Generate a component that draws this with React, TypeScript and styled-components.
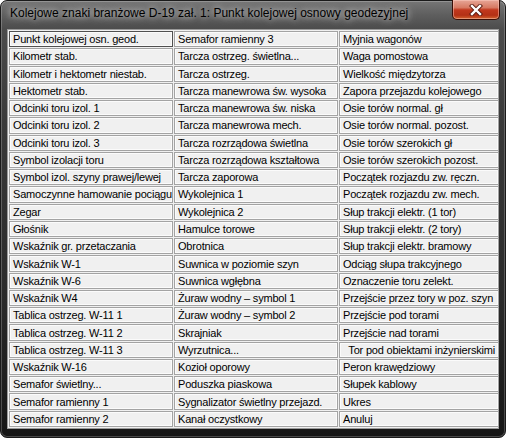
import React from "react";
import styled, { createGlobalStyle } from "styled-components";

const Global = createGlobalStyle`
  html, body { margin: 0; padding: 0; background: #ffffff; }
  body { width: 506px; height: 438px; overflow: hidden; }
`;

const Window = styled.div`
  box-sizing: border-box;
  width: 506px;
  height: 438px;
  border-radius: 7px;
  border: 1px solid #1a1a1a;
  background: linear-gradient(to bottom, #767676 0px, #5e5e5e 14px, #4c4c4c 28px, #3a3a3a 120px, #2a2a2a 300px, #161616 437px);
  box-shadow: inset 0 0 0 1px rgba(255, 255, 255, 0.22);
  display: flex;
  flex-direction: column;
  padding: 0 6px 8px 6px;
`;

const TitleBar = styled.div`
  height: 28px;
  display: flex;
  align-items: flex-start;
  justify-content: space-between;
`;

const Title = styled.div`
  font-family: "Liberation Sans", Arial, sans-serif;
  font-size: 12px;
  color: #000;
  padding: 5px 0 0 3px;
  white-space: nowrap;
  text-shadow: 0 0 6px rgba(255, 255, 255, 0.75), 0 0 10px rgba(255, 255, 255, 0.5);
`;

const CloseButton = styled.div`
  box-sizing: border-box;
  width: 48px;
  height: 20px;
  margin-top: -1px;
  margin-right: -1px;
  border: 1px solid #3a0e06;
  border-top: none;
  border-radius: 0 0 5px 5px;
  background: linear-gradient(to bottom, #e7a697 0%, #d77a63 40%, #c1381e 52%, #b43015 80%, #d2642f 100%);
  box-shadow: inset 0 0 0 1px rgba(255, 210, 200, 0.45);
  display: flex;
  align-items: center;
  justify-content: center;
`;

const Client = styled.div`
  box-sizing: border-box;
  flex: 1;
  background: #f0f0f0;
  border: 1px solid #9a9a9a;
  padding: 1px 0 1px 1px;
  display: grid;
  grid-template-columns: 164px 164px 160px;
  grid-template-rows: repeat(23, 1fr);
  column-gap: 1px;
  row-gap: 1px;
`;

const Cell = styled.div<{ $focused?: boolean; $align?: "left" | "right" }>`
  box-sizing: border-box;
  border: 1px solid ${(p) => (p.$focused ? "#505050" : "#a3a3a3")};
  background: #f0f0f0;
  box-shadow: inset 0 0 0 1px #fbfbfb;
  font-family: "Liberation Sans", Tahoma, Arial, sans-serif;
  font-size: 11px;
  letter-spacing: -0.2px;
  color: #000;
  display: flex;
  align-items: center;
  justify-content: ${(p) => (p.$align === "right" ? "flex-end" : "flex-start")};
  padding: 0 3px;
  white-space: nowrap;
  overflow: hidden;
`;

const col1 = [
  "Punkt kolejowej osn. geod.",
  "Kilometr stab.",
  "Kilometr i hektometr niestab.",
  "Hektometr stab.",
  "Odcinki toru izol. 1",
  "Odcinki toru izol. 2",
  "Odcinki toru izol. 3",
  "Symbol izolacji toru",
  "Symbol izol. szyny prawej/lewej",
  "Samoczynne hamowanie pociągu",
  "Zegar",
  "Głośnik",
  "Wskaźnik gr. przetaczania",
  "Wskaźnik W-1",
  "Wskaźnik W-6",
  "Wskaźnik W4",
  "Tablica ostrzeg. W-11 1",
  "Tablica ostrzeg. W-11 2",
  "Tablica ostrzeg. W-11 3",
  "Wskaźnik W-16",
  "Semafor świetlny...",
  "Semafor ramienny 1",
  "Semafor ramienny 2",
];

const col2 = [
  "Semafor ramienny 3",
  "Tarcza ostrzeg. świetlna...",
  "Tarcza ostrzeg.",
  "Tarcza manewrowa św. wysoka",
  "Tarcza manewrowa św. niska",
  "Tarcza manewrowa mech.",
  "Tarcza rozrządowa świetlna",
  "Tarcza rozrządowa kształtowa",
  "Tarcza zaporowa",
  "Wykolejnica 1",
  "Wykolejnica 2",
  "Hamulce torowe",
  "Obrotnica",
  "Suwnica w poziomie szyn",
  "Suwnica wgłębna",
  "Żuraw wodny – symbol 1",
  "Żuraw wodny – symbol 2",
  "Skrajniak",
  "Wyrzutnica...",
  "Kozioł oporowy",
  "Poduszka piaskowa",
  "Sygnalizator świetlny przejazd.",
  "Kanał oczystkowy",
];

const col3 = [
  "Myjnia wagonów",
  "Waga pomostowa",
  "Wielkość międzytorza",
  "Zapora przejazdu kolejowego",
  "Osie torów normal. gł",
  "Osie torów normal. pozost.",
  "Osie torów szerokich gł",
  "Osie torów szerokich pozost.",
  "Początek rozjazdu zw. ręczn.",
  "Początek rozjazdu zw. mech.",
  "Słup trakcji elektr. (1 tor)",
  "Słup trakcji elektr. (2 tory)",
  "Słup trakcji elektr. bramowy",
  "Odciąg słupa trakcyjnego",
  "Oznaczenie toru zelekt.",
  "Przejście przez tory w poz. szyn",
  "Przejście pod torami",
  "Przejście nad torami",
  "Tor pod obiektami inżynierskimi",
  "Peron krawędziowy",
  "Słupek kablowy",
  "Ukres",
  "Anuluj",
];

const CloseIcon = () => (
  <svg width="14" height="12" viewBox="0 0 14 12">
    <path d="M3 2 L11 10 M11 2 L3 10" stroke="#5a1a10" strokeWidth="4.2" strokeLinecap="square" />
    <path d="M3 2 L11 10 M11 2 L3 10" stroke="#ffffff" strokeWidth="2.4" strokeLinecap="square" />
  </svg>
);

export default function App() {
  const cells: React.ReactNode[] = [];
  for (let r = 0; r < 23; r++) {
    cells.push(
      <Cell key={`a${r}`} $focused={r === 0}>
        {col1[r]}
      </Cell>
    );
    cells.push(<Cell key={`b${r}`}>{col2[r]}</Cell>);
    cells.push(
      <Cell key={`c${r}`} $align={r === 18 ? "right" : "left"}>
        {col3[r]}
      </Cell>
    );
  }
  return (
    <>
      <Global />
      <Window>
        <TitleBar>
          <Title>Kolejowe znaki branżowe D-19 zał. 1: Punkt kolejowej osnowy geodezyjnej</Title>
          <CloseButton>
            <CloseIcon />
          </CloseButton>
        </TitleBar>
        <Client>{cells}</Client>
      </Window>
    </>
  );
}
